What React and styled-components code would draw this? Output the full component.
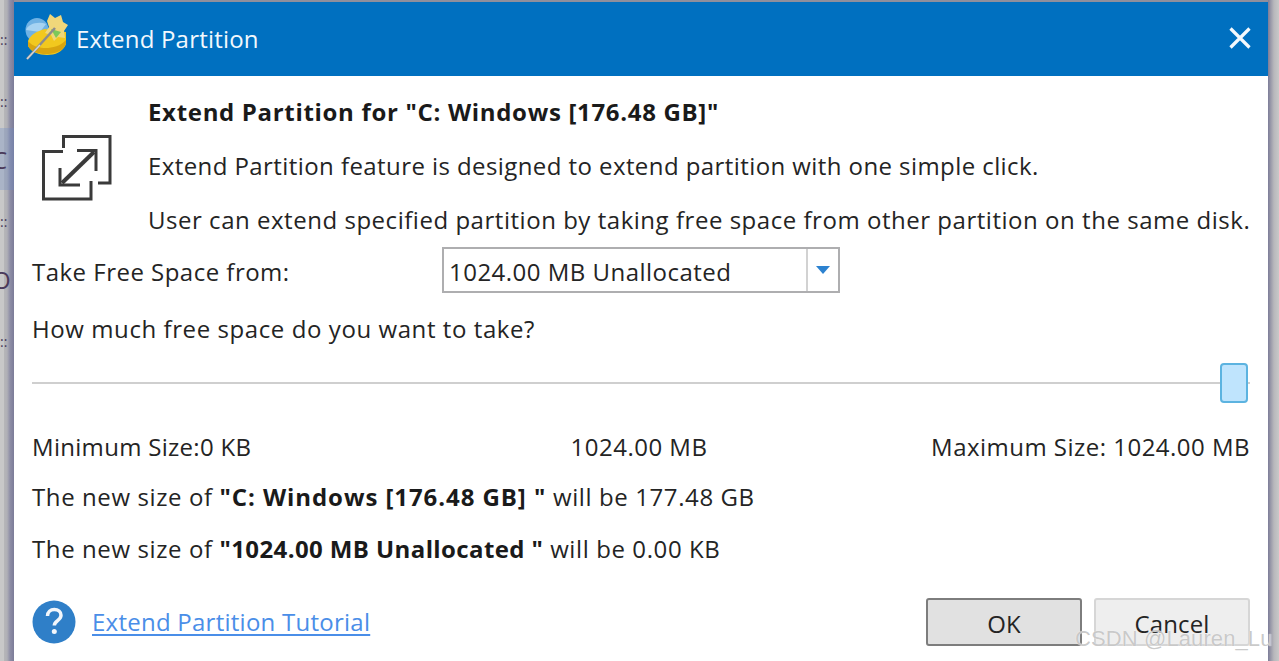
import React from 'react'
import styled, { createGlobalStyle } from 'styled-components'

const Global = createGlobalStyle`
  html, body { margin: 0; padding: 0; height: 100%; overflow: hidden; background: #c4c4c6; }
  #root { height: 100%; }
`

// window behind the dialog, only its edges show
const Page = styled.div`
  width: 1279px; height: 661px; display: flex; position: relative; overflow: hidden;
  font-family: "Open Sans", "Noto Sans", sans-serif; color: #242424;
`
const LeftEdge = styled.div`
  width: 14px; flex: none; position: relative; overflow: hidden;
  background: linear-gradient(90deg, #c8c8c8 0, #c8c8c8 4px, #b6b6b8 4px, #b0b0b6 7px, #8e8ea6 10px, #7c7c98 14px);
`
const EdgeBand = styled.div`
  height: 62px; margin-top: 128px; background: rgba(110, 140, 200, .32);
`
const EdgeGlyph = styled.span`
  position: absolute; left: ${p => p.$left}px; top: ${p => p.$top}px; font-size: ${p => p.$size}px; line-height: 24px; color: #4a3a5a;
`
const RightEdge = styled.div`
  width: 11px; flex: none;
  background: linear-gradient(90deg, #7c7c98 0, #9c9caa 3px, #b8b8bc 6px, #c8c8c8 11px);
`
const Dialog = styled.div`
  width: 1254px; flex: none; border-top: 2px solid #8f8f9c; background: #fff; display: flex; flex-direction: column;
`
const TitleBar = styled.div`
  height: 74px; flex: none; background: #0070c0; color: #fff; display: flex; align-items: center;
  padding: 0 17px 0 11px; font-size: 24px;
`
const TitleText = styled.span`
  margin-left: 7px; flex: 1; color: #f2f8fd; letter-spacing: .2px; padding-bottom: 2px;
`
const Logo = styled.div`
  display: flex; margin-bottom: 4px;
`
const CloseWrap = styled.div`
  display: flex; margin-bottom: 3px;
`
const Body = styled.div`
  padding: 20px 18px 0; display: flex; flex-direction: column; font-size: 24px; line-height: 32px; letter-spacing: .48px;
`
const Intro = styled.div`
  display: grid; grid-template-columns: 116px 1fr; align-items: center;
`
const IntroIcon = styled.div`
  padding: 4px 0 0 10px; display: flex;
`
const IntroText = styled.div`
  display: flex; flex-direction: column; gap: 22px; white-space: nowrap;
`
const IntroLine = styled.span`
  letter-spacing: ${p => p.$spacing}px;
`
const Strong = styled.b`
  font-weight: 700; color: #1a1a1a; letter-spacing: ${p => p.$spacing || .68}px;
`
const PickRow = styled.div`
  display: flex; align-items: center; margin-top: 11px; height: 46px;
`
const PickLabel = styled.span`
  width: 410px; padding-top: 3px;
`
const Select = styled.div`
  width: 398px; height: 46px; box-sizing: border-box; border: 2px solid #aeaeb0; display: flex; align-items: center;
`
const SelectValue = styled.span`
  flex: 1; box-sizing: border-box; padding: 3px 0 0 5px; border-right: 2px solid #d2d2d2; height: 100%; display: flex; align-items: center;
`
const SelectArrow = styled.span`
  width: 30px; display: flex; justify-content: center;
`
const Question = styled.div`
  margin-top: 20px; letter-spacing: .58px;
`
const SliderRow = styled.div`
  height: 40px; margin-top: 18px; position: relative; display: flex; align-items: center;
`
const Track = styled.div`
  flex: 1; height: 2px; background: #cfcfcf;
`
const Thumb = styled.div`
  position: absolute; right: 2px; top: 0; width: 28px; height: 40px; box-sizing: border-box;
  background: #bfe4fd; border: 2px solid #5cb3e0; border-radius: 4px;
`
const SizeRow = styled.div`
  display: grid; grid-template-columns: 1fr 1fr 1fr; margin-top: 28px;
`
const SizeMin = styled.span`
  letter-spacing: .3px;
`
const SizeMid = styled.span`
  text-align: center; padding-right: 4px;
`
const SizeRight = styled.span`
  text-align: right;
`
const NewSize = styled.div`
  margin-top: ${p => p.$gap}px; letter-spacing: .6px;
`
const Footer = styled.div`
  display: flex; align-items: center; margin-top: 33px;
`
const Tutorial = styled.a`
  margin-left: 16px; flex: 1; color: #4a8ee8; letter-spacing: .25px; text-decoration: underline; text-underline-offset: 3px;
`
const Button = styled.button`
  width: 156px; height: 48px; box-sizing: border-box; font: inherit; margin-left: 12px; padding: 3px 0 0;
  border-radius: 3px; color: #242424; line-height: 1; letter-spacing: .1px;
  background: ${p => (p.$primary ? '#e1e1e1' : '#eeeeee')};
  border: 2px solid ${p => (p.$primary ? '#7d7d7d' : '#d6d6d6')};
`
const Watermark = styled.div`
  position: absolute; left: 1075px; top: 625px; font-family: "Liberation Sans", sans-serif; font-size: 22px; line-height: 28px;
  letter-spacing: .1px; color: rgba(178, 178, 178, .7); text-shadow: 0 0 1px #fff; white-space: nowrap;
`

const WandLogo = () => (
  <svg width="44" height="46" viewBox="0 0 44 46">
    <ellipse cx="12" cy="16" rx="11.500" ry="12" fill="#6fb2e4" />
    <path d="M1 16c2-6 12-9 20-6l-6 8z" fill="#a6d3f2" />
    <path d="M3 27c2-6 9-10 17-12l21 3v12c-3 8-11 11-19 11S6 38 3 32z" fill="#f2c81e" />
    <path d="M3 32c3 6 11 8 18 8s17-2 20-10v-4c-5 6-14 8-20 8S8 33 3 27z" fill="#d9a50f" />
    <path d="M22 7l3-7 5 4 6-3 2 7 5 3-4 6 1 7-7-1-4 4-3-6-6-2 4-6z" fill="#f0d77a" />
    <path d="M26 15l10 3-5 6z" fill="#7cc95a" />
    <path d="M2 45L30 14" stroke="#8c8c8c" strokeWidth="2.500" />
    <path d="M2 45L15 31" stroke="#d4d4d4" strokeWidth="1.500" />
  </svg>
)

const CloseIcon = () => (
  <svg width="22" height="22" viewBox="0 0 22 22">
    <path d="M1.500 1.500l19 19M20.500 1.500l-19 19" stroke="#f4f9fd" strokeWidth="3.200" />
  </svg>
)

const ExtendIcon = () => (
  <svg width="70" height="66" viewBox="0 0 70 66" fill="none" stroke="#3a3a3a" strokeWidth="3">
    <path d="M21.500 13V1.500H68V48H56" />
    <path d="M21 16.500H1.500V64H49V46" />
    <path d="M20 48L52 17" strokeWidth="4" />
    <path d="M35 15.500H54V36" />
    <path d="M18 33V50H38" />
  </svg>
)

const DownArrow = () => (
  <svg width="14" height="8" viewBox="0 0 14 8">
    <path d="M0 0h14L7 8z" fill="#2c82d0" />
  </svg>
)

const HelpIcon = () => (
  <svg width="44" height="44" viewBox="0 0 44 44">
    <circle cx="22" cy="22" r="21.500" fill="#2f7fc8" />
    <path d="M15.500 16c0-4 3-6.500 6.800-6.500s6.700 2.300 6.700 5.700c0 5.300-6.700 5.300-6.700 10.300" fill="none" stroke="#f2f6fb" strokeWidth="3.500" />
    <circle cx="22.300" cy="31.500" r="2.500" fill="#f2f6fb" />
  </svg>
)

export default function App() {
  return (
    <Page>
      <Global />
      <LeftEdge>
        <EdgeBand />
        <EdgeGlyph $left={0} $top={28} $size={14}>::</EdgeGlyph>
        <EdgeGlyph $left={0} $top={90} $size={14}>::</EdgeGlyph>
        <EdgeGlyph $left={-8} $top={148} $size={24}>C</EdgeGlyph>
        <EdgeGlyph $left={0} $top={210} $size={14}>::</EdgeGlyph>
        <EdgeGlyph $left={-8} $top={268} $size={24}>O</EdgeGlyph>
        <EdgeGlyph $left={0} $top={330} $size={14}>::</EdgeGlyph>
      </LeftEdge>
      <Dialog>
        <TitleBar>
          <Logo><WandLogo /></Logo>
          <TitleText>Extend Partition</TitleText>
          <CloseWrap><CloseIcon /></CloseWrap>
        </TitleBar>
        <Body>
          <Intro>
            <IntroIcon><ExtendIcon /></IntroIcon>
            <IntroText>
              <Strong>Extend Partition for "C: Windows [176.48 GB]"</Strong>
              <IntroLine $spacing={.42}>Extend Partition feature is designed to extend partition with one simple click.</IntroLine>
              <IntroLine $spacing={.53}>User can extend specified partition by taking free space from other partition on the same disk.</IntroLine>
            </IntroText>
          </Intro>
          <PickRow>
            <PickLabel>Take Free Space from:</PickLabel>
            <Select>
              <SelectValue>1024.00 MB Unallocated</SelectValue>
              <SelectArrow><DownArrow /></SelectArrow>
            </Select>
          </PickRow>
          <Question>How much free space do you want to take?</Question>
          <SliderRow>
            <Track />
            <Thumb />
          </SliderRow>
          <SizeRow>
            <SizeMin>Minimum Size:0 KB</SizeMin>
            <SizeMid>1024.00 MB</SizeMid>
            <SizeRight>Maximum Size: 1024.00 MB</SizeRight>
          </SizeRow>
          <NewSize $gap={18}>The new size of <Strong $spacing={.93}>"C: Windows [176.48 GB] "</Strong> will be 177.48 GB</NewSize>
          <NewSize $gap={20}>The new size of <Strong $spacing={.4}>"1024.00 MB Unallocated "</Strong> will be 0.00 KB</NewSize>
          <Footer>
            <HelpIcon />
            <Tutorial>Extend Partition Tutorial</Tutorial>
            <Button $primary>OK</Button>
            <Button>Cancel</Button>
          </Footer>
        </Body>
      </Dialog>
      <RightEdge />
      <Watermark>CSDN @Lauren_Lu</Watermark>
    </Page>
  )
}
